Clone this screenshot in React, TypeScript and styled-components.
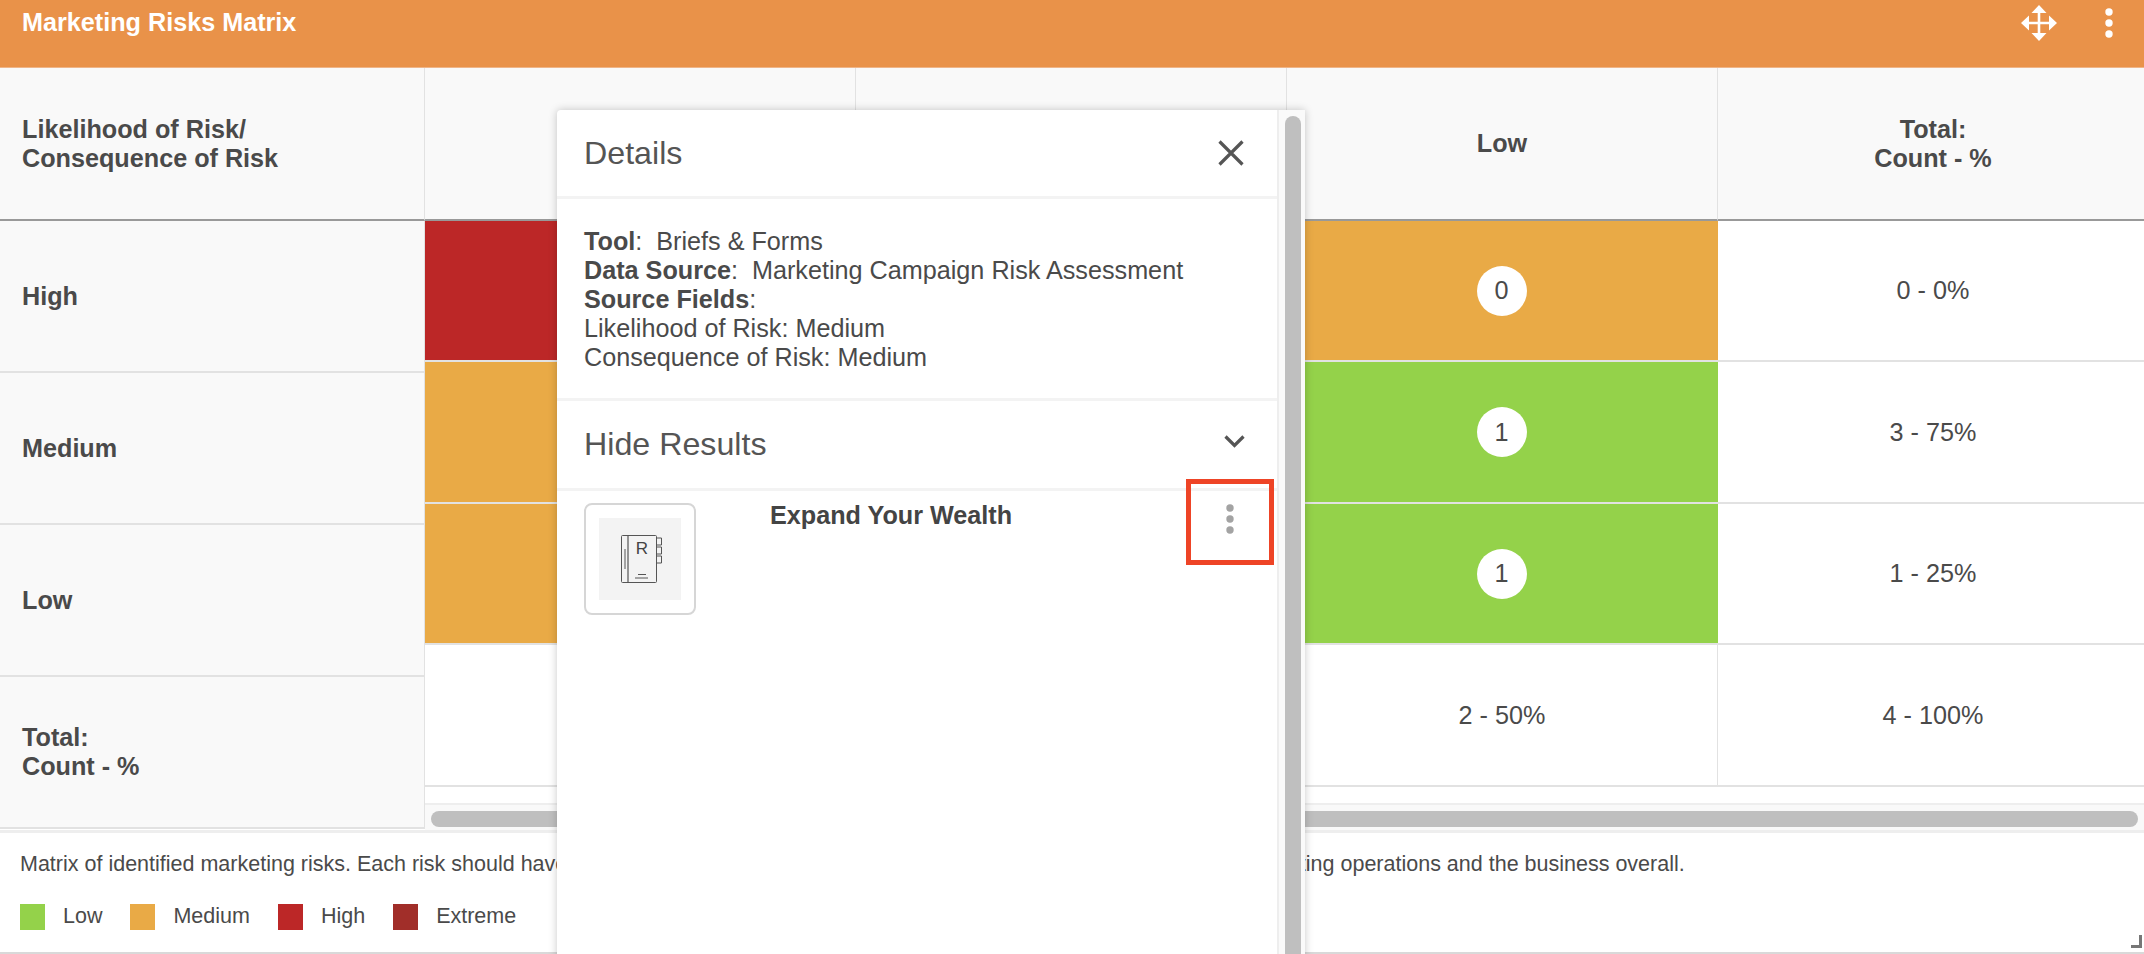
import { Fragment } from "react";
import styled, { createGlobalStyle } from "styled-components";

const GlobalStyle = createGlobalStyle`
  html, body {
    margin: 0;
    padding: 0;
    background: #fff;
  }
  body {
    font-family: "Liberation Sans", Arial, sans-serif;
    color: #444;
    overflow: hidden;
  }
  * {
    box-sizing: border-box;
  }
`;

const Page = styled.div`
  position: relative;
  width: 2144px;
  height: 954px;
  overflow: hidden;
  display: flex;
  flex-direction: column;
`;

// Barre orange
const TitleBar = styled.header`
  height: 68px;
  flex: none;
  background: #e99249;
  border-bottom: 1px solid #efb588;
  padding: 0 31px 0 22px;
  display: flex;
  align-items: flex-start;
  justify-content: space-between;
`;

const Title = styled.h1`
  margin: 0;
  font-size: 25.2px;
  line-height: 45px;
  font-weight: 700;
  color: #fff;
`;

const TitleActions = styled.div`
  display: flex;
  align-items: center;
  gap: 48px;
  height: 46px;
`;

// Matrice
const MatrixWrap = styled.div`
  height: 765px;
  flex: none;
  display: flex;
  border-bottom: 3px solid #eee;
`;

const RowHeaders = styled.div`
  width: 425px;
  flex: none;
  display: grid;
  grid-template-rows: 153px 152px 152px 152px 152px;
  align-content: start;
`;

const RowHeader = styled.div<{ $head?: boolean }>`
  background: #f9f9f9;
  padding: 0 22px;
  display: flex;
  align-items: center;
  font-size: 25.2px;
  line-height: 29px;
  font-weight: 700;
  color: #4a4a4a;
  border-right: 1px solid #e2e2e2;
  border-bottom: ${({ $head }) => ($head ? "2px solid #999" : "2px solid #e2e2e2")};
`;

const ScrollArea = styled.div`
  flex: 1;
  display: flex;
  flex-direction: column;
  min-width: 0;
  overflow: hidden;
`;

const MatrixGrid = styled.div`
  display: grid;
  grid-template-columns: repeat(4, 431px);
  grid-template-rows: 153px 141px 142px 141px 142px;
`;

const toneColors: Record<string, string> = {
  head: "#f9f9f9",
  white: "#fff",
  high: "#bc2727",
  medium: "#e9aa46",
  low: "#94d24a",
};

const Cell = styled.div<{ $tone: string }>`
  background: ${({ $tone }) => toneColors[$tone]};
  display: flex;
  align-items: center;
  justify-content: center;
  text-align: center;
  font-size: 25.2px;
  line-height: 29px;
  color: #4a4a4a;
  font-weight: ${({ $tone }) => ($tone === "head" ? 700 : 400)};
  border-bottom: ${({ $tone }) => ($tone === "head" ? "2px solid #999" : "2px solid #e2e2e2")};
  border-right: ${({ $tone }) =>
    $tone === "head" || $tone === "white" ? "1px solid #e2e2e2" : "none"};
`;

const Badge = styled.span`
  width: 50px;
  height: 50px;
  margin-right: 2px;
  border-radius: 50%;
  background: #fff;
  display: flex;
  align-items: center;
  justify-content: center;
`;

const ScrollTrack = styled.div`
  margin-top: 16px;
  flex: 1;
  background: #f9f9f9;
  border-top: 2px solid #eee;
  padding: 6px 6px 0;
`;

const ScrollThumb = styled.div`
  height: 16px;
  border-radius: 8px;
  background: #bfbfbf;
`;

// Pied
const Footer = styled.footer`
  flex: 1;
  border-bottom: 2px solid #d9d9d9;
  padding: 17px 20px 0;
  font-size: 21.5px;
  line-height: 29px;
  color: #4a4a4a;
`;

const Description = styled.p`
  margin: 0 0 23px;
`;

const Legend = styled.div`
  display: flex;
  align-items: center;
`;

const LegendItem = styled.div`
  display: flex;
  align-items: center;
  gap: 18px;
  margin-right: 28px;
`;

const Swatch = styled.span<{ $color: string }>`
  width: 25px;
  height: 26px;
  background: ${({ $color }) => $color};
`;

const ResizeCorner = styled.span`
  position: absolute;
  right: 2px;
  bottom: 6px;
  width: 11px;
  height: 13px;
  border-right: 3px solid #777;
  border-bottom: 3px solid #777;
`;

// Panneau de details
const DetailsPanel = styled.aside`
  position: absolute;
  left: 557px;
  top: 110px;
  width: 748px;
  height: 860px;
  display: flex;
  background: #fff;
  border-radius: 4px 0 0 0;
  box-shadow: 0 0 9px rgba(0, 0, 0, 0.22);
`;

const PanelBody = styled.div`
  width: 722px;
  flex: none;
  border-right: 2px solid #eee;
`;

const PanelBar = styled.div`
  width: 26px;
  flex: none;
  background: #fafafa;
  padding: 6px 4px 0 6px;
`;

const PanelThumb = styled.div`
  height: 100%;
  border-radius: 8px 8px 0 0;
  background: #bfbfbf;
`;

const PanelHead = styled.div<{ $height: number }>`
  height: ${({ $height }) => $height}px;
  display: flex;
  align-items: center;
  justify-content: space-between;
  padding: 0 33px 0 27px;
  border-bottom: 3px solid #f3f3f3;
  font-size: 32.2px;
  color: #555;
`;

const Facts = styled.div`
  height: 202px;
  padding: 28px 27px 0;
  border-bottom: 3px solid #f3f3f3;
  font-size: 25.2px;
  line-height: 29px;
  color: #4a4a4a;
`;

const FactLine = styled.div`
  white-space: pre;
`;

const ResultRow = styled.div`
  position: relative;
  display: flex;
  align-items: flex-start;
  padding: 12px 27px;
`;

const Thumb = styled.div`
  width: 112px;
  height: 112px;
  flex: none;
  border: 2px solid #d6d6d6;
  border-radius: 8px;
  display: flex;
  align-items: center;
  justify-content: center;
`;

const ThumbInner = styled.div`
  width: 82px;
  height: 82px;
  padding-left: 3px;
  background: #f3f3f3;
  display: flex;
  align-items: center;
  justify-content: center;
`;

const ResultTitle = styled.div`
  margin: -2px 0 0 74px;
  font-size: 25.2px;
  line-height: 29px;
  font-weight: 700;
  color: #444;
`;

const MenuMark = styled.div`
  position: absolute;
  top: -12px;
  right: 3px;
  width: 88px;
  height: 86px;
  border: 5px solid #ee4426;
  display: flex;
  align-items: center;
  justify-content: center;
  padding-bottom: 6px;
`;

const ChevronWrap = styled.span`
  display: flex;
  margin: 0 -1px 6px 0;
`;

function MoveIcon() {
  return (
    <svg width="36" height="36" viewBox="0 0 36 36" fill="#fff">
      <path d="M18 4V32M4 18H32" stroke="#fff" strokeWidth="2.6" />
      <path d="M18 0L25.5 8H10.5ZM18 36L25.5 28H10.5ZM0 18L8 10.5V25.5ZM36 18L28 10.5V25.5Z" />
    </svg>
  );
}

function Kebab({ color }: { color: string }) {
  return (
    <svg width="8" height="30" viewBox="0 0 8 30" fill={color}>
      <circle cx="4" cy="4" r="3.7" />
      <circle cx="4" cy="15" r="3.7" />
      <circle cx="4" cy="26" r="3.7" />
    </svg>
  );
}

function CloseIcon() {
  return (
    <svg width="26" height="26" viewBox="0 0 26 26" stroke="#555" strokeWidth="3.2">
      <path d="M1.5 1.5L24.5 24.5M24.5 1.5L1.5 24.5" />
    </svg>
  );
}

function Chevron() {
  return (
    <ChevronWrap>
      <svg width="21" height="13" viewBox="0 0 21 13" fill="none" stroke="#555" strokeWidth="3.2">
        <path d="M1.5 1.5L10.5 10.5L19.5 1.5" />
      </svg>
    </ChevronWrap>
  );
}

function BookIcon() {
  return (
    <svg width="44" height="50" viewBox="0 0 44 50" fill="none" stroke="#555" strokeWidth="1">
      <rect x="1.5" y="1.5" width="35" height="47" rx="1" />
      <path d="M8 1.5V48.5" strokeWidth="1.2" />
      <path d="M5 15V35" strokeWidth="1" />
      <path d="M37 4H41.5V11H37M37 13H41.5V20H37M37 22H41.5V29H37" />
      <path d="M18 40.5H26M15 44H28" />
      <text x="22" y="20" fontSize="17" fill="#444" stroke="none" textAnchor="middle" fontFamily="'Liberation Sans', Arial, sans-serif">
        R
      </text>
    </svg>
  );
}

const rows = [
  { tones: ["high", "white", "medium"], low: "0", total: "0 - 0%" },
  { tones: ["medium", "white", "low"], low: "1", total: "3 - 75%" },
  { tones: ["medium", "white", "low"], low: "1", total: "1 - 25%" },
];

const legend = [
  { label: "Low", color: "#94d24a" },
  { label: "Medium", color: "#e9aa46" },
  { label: "High", color: "#bc2727" },
  { label: "Extreme", color: "#a12e29" },
];

export default function App() {
  return (
    <Page>
      <GlobalStyle />
      <TitleBar>
        <Title>Marketing Risks Matrix</Title>
        <TitleActions>
          <MoveIcon />
          <Kebab color="#fff" />
        </TitleActions>
      </TitleBar>

      <MatrixWrap>
        <RowHeaders>
          <RowHeader $head>
            Likelihood of Risk/
            <br />
            Consequence of Risk
          </RowHeader>
          <RowHeader>High</RowHeader>
          <RowHeader>Medium</RowHeader>
          <RowHeader>Low</RowHeader>
          <RowHeader>
            Total:
            <br />
            Count - %
          </RowHeader>
        </RowHeaders>
        <ScrollArea>
          <MatrixGrid>
            <Cell $tone="head" />
            <Cell $tone="head" />
            <Cell $tone="head">Low</Cell>
            <Cell $tone="head">
              <span>
                Total:
                <br />
                Count - %
              </span>
            </Cell>
            {rows.map((row, index) => (
              <Fragment key={index}>
                <Cell $tone={row.tones[0]} />
                <Cell $tone={row.tones[1]} />
                <Cell $tone={row.tones[2]}>
                  <Badge>{row.low}</Badge>
                </Cell>
                <Cell $tone="white">{row.total}</Cell>
              </Fragment>
            ))}
            <Cell $tone="white" />
            <Cell $tone="white" />
            <Cell $tone="white">2 - 50%</Cell>
            <Cell $tone="white">4 - 100%</Cell>
          </MatrixGrid>
          <ScrollTrack>
            <ScrollThumb />
          </ScrollTrack>
        </ScrollArea>
      </MatrixWrap>

      <Footer>
        <Description>
          Matrix of identified marketing risks. Each risk should have a mitigation plan and one owner so that the impact remains limited on marketing operations and the business overall.
        </Description>
        <Legend>
          {legend.map((item) => (
            <LegendItem key={item.label}>
              <Swatch $color={item.color} />
              {item.label}
            </LegendItem>
          ))}
        </Legend>
      </Footer>
      <ResizeCorner />

      <DetailsPanel>
        <PanelBody>
          <PanelHead $height={89}>
            Details
            <CloseIcon />
          </PanelHead>
          <Facts>
            <FactLine>
              <b>Tool</b>:{"  "}Briefs &amp; Forms
            </FactLine>
            <FactLine>
              <b>Data Source</b>:{"  "}Marketing Campaign Risk Assessment
            </FactLine>
            <FactLine>
              <b>Source Fields</b>:
            </FactLine>
            <FactLine>Likelihood of Risk: Medium</FactLine>
            <FactLine>Consequence of Risk: Medium</FactLine>
          </Facts>
          <PanelHead $height={90}>
            Hide Results
            <Chevron />
          </PanelHead>
          <ResultRow>
            <Thumb>
              <ThumbInner>
                <BookIcon />
              </ThumbInner>
            </Thumb>
            <ResultTitle>Expand Your Wealth</ResultTitle>
            <MenuMark>
              <Kebab color="#a3a3a3" />
            </MenuMark>
          </ResultRow>
        </PanelBody>
        <PanelBar>
          <PanelThumb />
        </PanelBar>
      </DetailsPanel>
    </Page>
  );
}
